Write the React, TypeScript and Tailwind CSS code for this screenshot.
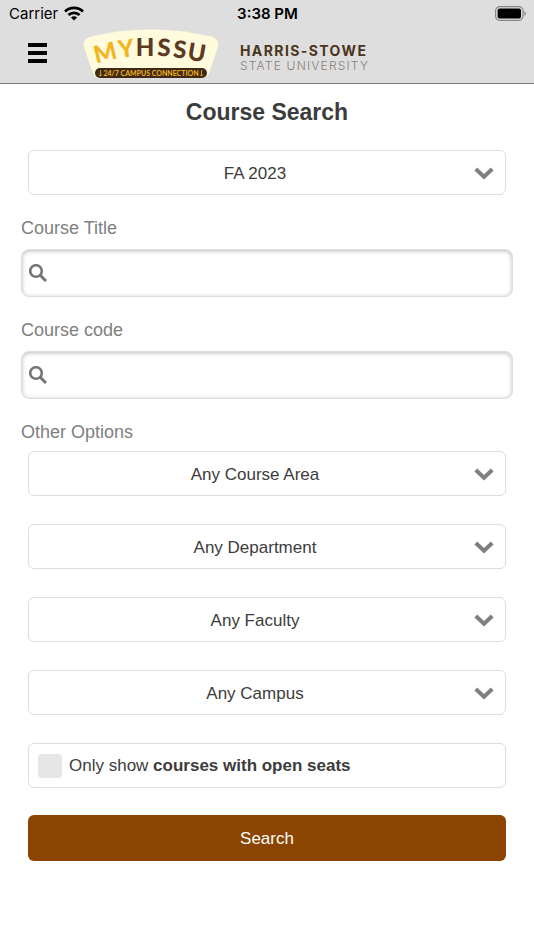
import { useState } from "react";

const TERMS = ["FA 2023", "SP 2024", "SU 2024"];

const FILTERS = [
  { id: "area", label: "Course area", options: ["Any Course Area"] },
  { id: "department", label: "Department", options: ["Any Department"] },
  { id: "faculty", label: "Faculty", options: ["Any Faculty"] },
  { id: "campus", label: "Campus", options: ["Any Campus"] },
];

// letters of the logo follow a shallow arc
const LOGO_LETTERS = [
  { char: "M", x: 22, y: 23, angle: -14, color: "#f2b51f" },
  { char: "Y", x: 43, y: 19, angle: -8, color: "#f2b51f" },
  { char: "H", x: 62, y: 18, angle: 0, color: "#5c3a22" },
  { char: "S", x: 81, y: 18, angle: 3, color: "#5c3a22" },
  { char: "S", x: 97, y: 20, angle: 6, color: "#5c3a22" },
  { char: "U", x: 114, y: 23, angle: 10, color: "#5c3a22" },
];

export default function App() {
  const [openOnly, setOpenOnly] = useState(false);

  return (
    <div className="min-h-screen bg-white font-['Liberation_Sans',Arial,sans-serif] text-[#3c3c3c]">
      <header className="border-b border-[#777777] bg-[#dedede]">
        <StatusBar />
        <div className="flex h-14 items-center pl-7">
          <button type="button" aria-label="Menu" className="-mt-1 flex w-[19px] flex-col gap-1">
            <span className="h-1 bg-black" />
            <span className="h-1 bg-black" />
            <span className="h-1 bg-black" />
          </button>
          <a href="#home" aria-label="MyHSSU home" className="ml-9 pb-0.5">
            <CampusLogo />
          </a>
          <div className="ml-[21px] pt-1.5 font-['Inter',sans-serif]">
            <p className="text-sm leading-[15px] font-bold tracking-widest text-[#4a3520]">HARRIS-STOWE</p>
            <p className="text-xs leading-[15px] font-light tracking-widest text-[#8a8178]">STATE UNIVERSITY</p>
          </div>
        </div>
      </header>

      <main className="px-[21px] pt-3">
        <h1 className="text-center text-[23px] leading-8 font-bold">Course Search</h1>

        <form onSubmit={e => e.preventDefault()}>
          <div className="mt-[22px] px-[7px]">
            <SelectBox id="term" label="Term" options={TERMS} />
          </div>

          <SearchField id="title" label="Course Title" />
          <SearchField id="code" label="Course code" />

          <fieldset>
            <legend className="pt-[21px] text-lg leading-6 text-[#808080]">Other Options</legend>
            <div className="mt-[7px] flex flex-col gap-7 px-[7px]">
              {FILTERS.map(f => (
                <SelectBox key={f.id} id={f.id} label={f.label} options={f.options} />
              ))}

              <div className="flex flex-col gap-[27px]">
                <label className="flex h-[45px] items-center gap-[7px] rounded-md border border-[#dddddd] pl-[9px] text-[17px]">
                  <input
                    type="checkbox"
                    checked={openOnly}
                    onChange={e => setOpenOnly(e.target.checked)}
                    className="size-6 appearance-none rounded-sm bg-[#e6e6e6] checked:bg-[#8b4500]"
                  />
                  <span>
                    Only show <strong>courses with open seats</strong>
                  </span>
                </label>

                <button type="submit" className="h-[46px] rounded-md bg-[#8b4500] pt-0.5 text-[17px] text-white">
                  Search
                </button>
              </div>
            </div>
          </fieldset>
        </form>
      </main>
    </div>
  );
}

function StatusBar() {
  return (
    <div className="grid h-[27px] grid-cols-3 items-center pr-2 pl-[9px] font-['Inter',sans-serif] text-[15px] leading-5 text-black">
      <div className="flex items-center gap-[6px]">
        <span>Carrier</span>
        <svg viewBox="0 0 20 15" className="h-[15px] w-5" fill="none" stroke="#000" strokeWidth="2.8">
          <path d="M1 5.4C6.1.6 13.9.6 19 5.4" />
          <path d="M4.4 9c3.2-2.9 8-2.9 11.2 0" />
          <path d="M10 14.6 6.9 11.5c1.8-1.6 4.4-1.6 6.2 0Z" fill="#000" stroke="none" />
        </svg>
      </div>
      <span className="text-center font-semibold">3:38 PM</span>
      <svg viewBox="0 0 32 15" className="h-[15px] w-8 justify-self-end">
        <rect x="1.6" y="0.7" width="27.4" height="13.6" rx="4" fill="none" stroke="#858585" strokeWidth="1.2" />
        <rect x="3.6" y="2.5" width="23.4" height="10" rx="1.8" fill="#000" />
        <path d="M30.4 5.2c1.9.6 1.9 4 0 4.6Z" fill="#858585" />
      </svg>
    </div>
  );
}

function CampusLogo() {
  return (
    <svg viewBox="0 0 136 50" className="h-[50px] w-[136px]">
      <path d="M8 7.5Q68-6.5 128 7.5Q137 10 135 18Q130 33 126 44Q124 49 119 49H17Q12 49 10 44Q6 33 1 18Q-1 10 8 7.5Z" fill="#fffbdc" />
      {LOGO_LETTERS.map((l, i) => (
        <text
          key={i}
          x={l.x}
          y={l.y + 9}
          transform={`rotate(${l.angle} ${l.x} ${l.y})`}
          textAnchor="middle"
          fill={l.color}
          className="font-['Lato',sans-serif] text-[24px] font-black"
        >
          {l.char}
        </text>
      ))}
      <rect x="12" y="39" width="112" height="10" rx="5" fill="#3f2a18" />
      <text x="68" y="47" textAnchor="middle" fill="#f2b51f" className="font-['Lato',sans-serif] text-[7px] font-bold">
        24/7 CAMPUS CONNECTION
      </text>
      <path
        d="M17.5 41v6M16 45.500l1.500 1.600 1.500-1.600M118.500 41v6M117 45.500l1.500 1.600 1.500-1.600"
        fill="none"
        stroke="#f2b51f"
        strokeWidth="0.8"
      />
    </svg>
  );
}

function SelectBox({ id, label, options }: { id: string; label: string; options: string[] }) {
  return (
    <div className="relative">
      <select
        id={id}
        aria-label={label}
        className="block h-[45px] w-full appearance-none rounded-md border border-[#dddddd] bg-white pt-0.5 pr-6 text-center text-[17px] [text-align-last:center]"
      >
        {options.map(o => (
          <option key={o}>{o}</option>
        ))}
      </select>
      <svg
        viewBox="0 0 20 13"
        className="pointer-events-none absolute top-[17px] right-3 h-[13px] w-5"
        fill="none"
        stroke="#808080"
        strokeWidth="4"
      >
        <path d="M1.8 2 10 9.8 18.2 2" />
      </svg>
    </div>
  );
}

function SearchField({ id, label }: { id: string; label: string }) {
  return (
    <div className="pt-[21px]">
      <label htmlFor={id} className="block text-lg leading-6 text-[#808080]">{label}</label>
      <div className="relative mt-[9px]">
        <input
          id={id}
          type="text"
          className="block h-12 w-full rounded-lg border border-[#dddddd] bg-white pr-3 pl-9 text-[17px] shadow-[inset_0_1px_4px_#bbbbbb]"
        />
        <svg
          viewBox="0 0 18 18"
          className="pointer-events-none absolute top-[15px] left-2 size-[18px]"
          fill="none"
          stroke="#757575"
        >
          <circle cx="7" cy="7" r="5.8" strokeWidth="2.6" />
          <path d="m11 11 6 6" strokeWidth="3" />
        </svg>
      </div>
    </div>
  );
}
